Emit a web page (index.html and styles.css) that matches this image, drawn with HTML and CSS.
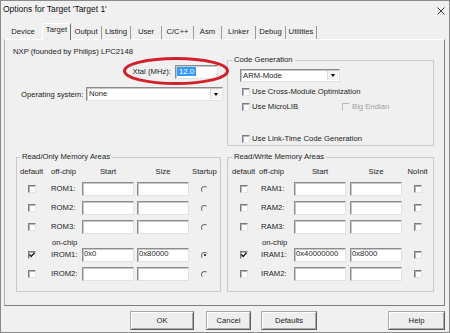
FILE: index.html
```html
<!DOCTYPE html>
<html>
<head>
<meta charset="utf-8">
<title>Options for Target 'Target 1'</title>
<link rel="stylesheet" href="styles.css">
</head>
<body>
<div class="window">
  <div class="titlebar">
    <span class="title">Options for Target 'Target 1'</span>
    <svg class="close" width="8" height="8" viewBox="0 0 8 8"><path d="M0.5 0.5 L7.5 7.5 M7.5 0.5 L0.5 7.5" stroke="#3a3a3a" stroke-width="1" fill="none"/></svg>
  </div>
  <div class="tabs">
    <div class="tab w-device no-sep">Device</div>
    <div class="tab w-target active">Target</div>
    <div class="tab w-output">Output</div>
    <div class="tab w-listing">Listing</div>
    <div class="tab w-user">User</div>
    <div class="tab w-cc">C/C++</div>
    <div class="tab w-asm">Asm</div>
    <div class="tab w-linker">Linker</div>
    <div class="tab w-debug">Debug</div>
    <div class="tab w-util">Utilities</div>
  </div>
  <div class="panel">
    <div class="top">
      <div class="left-col">
        <div class="device">NXP (founded by Philips) LPC2148</div>
        <div class="xtal-row">
          <span class="lbl-right">Xtal (MHz):</span>
          <div class="field field-xtal"><span class="sel">12.0</span></div>
        </div>
        <div class="os-row">
          <span>Operating system:</span>
          <div class="combo combo-os"><span class="combo-text">None</span><span class="combo-btn"><i class="arrow"></i></span></div>
        </div>
      </div>
      <fieldset class="group codegen">
        <legend>Code Generation</legend>
        <div class="codegen-body">
          <div class="combo combo-arm"><span class="combo-text">ARM-Mode</span><span class="combo-btn"><i class="arrow"></i></span></div>
          <div class="check-row row-cmo"><span class="cb"></span><span>Use Cross-Module Optimization</span></div>
          <div class="check-row row-micro">
            <span class="check-item micro"><span class="cb"></span><span>Use MicroLIB</span></span>
            <span class="check-item disabled"><span class="cb cb-disabled"></span><span>Big Endian</span></span>
          </div>
          <div class="check-row row-ltcg"><span class="cb"></span><span>Use Link-Time Code Generation</span></div>
        </div>
      </fieldset>
    </div>
    <div class="mem">
      <fieldset class="group mem-ro">
        <legend class="legend-ro">Read/Only Memory Areas</legend>
        <div class="memgrid ro">
          <span class="hd">default</span><span class="hd hd-off">off-chip</span><span class="hd hd-in">Start</span><span class="hd hd-in">Size</span><span class="hd">Startup</span>

          <span class="ck-cell"><span class="cb"></span></span><span class="lbl">ROM1:</span><span class="field"></span><span class="field"></span><span class="ck-cell"><span class="radio"></span></span>

          <span class="ck-cell"><span class="cb"></span></span><span class="lbl">ROM2:</span><span class="field"></span><span class="field"></span><span class="ck-cell"><span class="radio"></span></span>

          <span class="ck-cell"><span class="cb"></span></span><span class="lbl">ROM3:</span><span class="field"></span><span class="field"></span><span class="ck-cell"><span class="radio"></span></span>

          <span></span><span class="onchip">on-chip</span><span></span><span></span><span></span>

          <span class="ck-cell"><span class="cb checked"><svg width="6" height="6" viewBox="0 0 6 6"><path d="M0.5 2.5 L2.3 4.5 L5.5 0.8" stroke="#1a1a1a" stroke-width="1.4" fill="none"/></svg></span></span><span class="lbl">IROM1:</span><span class="field"><span class="val">0x0</span></span><span class="field"><span class="val">0x80000</span></span><span class="ck-cell"><span class="radio on"></span></span>

          <span class="ck-cell"><span class="cb"></span></span><span class="lbl">IROM2:</span><span class="field"></span><span class="field"></span><span class="ck-cell"><span class="radio"></span></span>
        </div>
      </fieldset>
      <fieldset class="group mem-rw">
        <legend>Read/Write Memory Areas</legend>
        <div class="memgrid rw">
          <span class="hd">default</span><span class="hd hd-off">off-chip</span><span class="hd hd-in">Start</span><span class="hd hd-in">Size</span><span class="hd">NoInit</span>

          <span class="ck-cell"><span class="cb"></span></span><span class="lbl">RAM1:</span><span class="field"></span><span class="field"></span><span class="ck-cell"><span class="cb"></span></span>

          <span class="ck-cell"><span class="cb"></span></span><span class="lbl">RAM2:</span><span class="field"></span><span class="field"></span><span class="ck-cell"><span class="cb"></span></span>

          <span class="ck-cell"><span class="cb"></span></span><span class="lbl">RAM3:</span><span class="field"></span><span class="field"></span><span class="ck-cell"><span class="cb"></span></span>

          <span></span><span class="onchip">on-chip</span><span></span><span></span><span></span>

          <span class="ck-cell"><span class="cb checked"><svg width="6" height="6" viewBox="0 0 6 6"><path d="M0.5 2.5 L2.3 4.5 L5.5 0.8" stroke="#1a1a1a" stroke-width="1.4" fill="none"/></svg></span></span><span class="lbl">IRAM1:</span><span class="field"><span class="val">0x40000000</span></span><span class="field"><span class="val">0x8000</span></span><span class="ck-cell"><span class="cb"></span></span>

          <span class="ck-cell"><span class="cb"></span></span><span class="lbl">IRAM2:</span><span class="field"></span><span class="field"></span><span class="ck-cell"><span class="cb"></span></span>
        </div>
      </fieldset>
    </div>
  </div>
  <div class="buttons">
    <div class="btn btn-ok">OK</div>
    <div class="btn btn-cancel">Cancel</div>
    <div class="btn btn-defaults">Defaults</div>
    <div class="btn btn-help">Help</div>
  </div>
  <svg class="annotation" width="112" height="32" viewBox="0 0 112 32"><ellipse cx="56" cy="16" rx="51.5" ry="12.5" fill="none" stroke="#d3212b" stroke-width="3"/></svg>
</div>
</body>
</html>
```

FILE: styles.css
```css
* { box-sizing: border-box; }
html, body { margin: 0; padding: 0; }
body {
  width: 450px;
  height: 333px;
  overflow: hidden;
  background: #f0f0f0;
  font-family: "Liberation Sans", Arial, sans-serif;
  font-size: 7.7px;
  color: #1c1c1c;
}
.window {
  position: relative;
  width: 450px;
  height: 333px;
  border: 1px solid #8a8a8a;
  background: #f0f0f0;
}
.titlebar {
  height: 22px;
  display: flex;
  align-items: flex-start;
  justify-content: space-between;
  padding: 2px 0 0 2px;
}
.title { font-size: 8.5px; line-height: 12px; color: #111; }
.close { margin: 4px 4px 0 0; }

.tabs {
  height: 16px;
  display: flex;
  align-items: flex-end;
  padding-left: 3px;
}
.tab {
  height: 13px;
  line-height: 10px;
  padding-top: 1px;
  text-align: center;
  border-right: 1px solid #9a9a9a;
  white-space: nowrap;
}
.tab.no-sep { border-right: none; }
.tab.active {
  height: 16px;
  padding-top: 1px;
  border-top: 1px solid #ffffff;
  border-left: 1px solid #ffffff;
  border-right: 1px solid #6f6f6f;
  margin-bottom: -1px;
  height: 17px;
  position: relative;
  background: #f0f0f0;
}
.w-device { width: 38px; }
.w-target { width: 29px; }
.w-output { width: 31px; }
.w-listing { width: 29px; }
.w-user { width: 31px; }
.w-cc { width: 32px; }
.w-asm { width: 28px; }
.w-linker { width: 34px; }
.w-debug { width: 30px; }
.w-util { width: 31px; }

.panel {
  margin: 0 4px 0 3px;
  height: 267px;
  border: 1px solid;
  border-color: #ffffff #7f7f7f #7f7f7f #b0b0b0;
}
.top {
  display: grid;
  grid-template-columns: 222px 207px;
  height: 106px;
}
.device { margin: 7px 0 0 8px; line-height: 10px; }
.xtal-row {
  display: grid;
  grid-template-columns: 166px 43px;
  column-gap: 4px;
  align-items: center;
  height: 14px;
  margin-top: 8px;
}
.lbl-right { text-align: right; line-height: 10px; }
.os-row {
  display: grid;
  grid-template-columns: 65px 137px;
  align-items: center;
  height: 14px;
  margin: 8px 0 0 16px;
}

.field {
  display: block;
  width: 52px;
  height: 14px;
  background: #ffffff;
  border: 1px solid;
  border-color: #8c8c8c #e2e2e2 #e2e2e2 #8c8c8c;
  box-shadow: inset 1px 1px 0 #c8c8c8;
  line-height: 10px;
  padding: 0 0 0 1px;
  white-space: nowrap;
  overflow: hidden;
}
.field-xtal { width: 43px; padding: 1px 0 0 1px; }
.sel {
  display: inline-block;
  background: #3399ff;
  color: #ffffff;
  padding: 0 2px;
  line-height: 9px;
}
.val { color: #1c1c1c; }

.combo {
  display: flex;
  height: 14px;
  background: #ffffff;
  border: 1px solid;
  border-color: #8c8c8c #e2e2e2 #e2e2e2 #8c8c8c;
  box-shadow: inset 1px 1px 0 #c8c8c8;
}
.combo-text { line-height: 12px; padding-left: 2px; flex: 1; }
.combo-btn {
  width: 11px;
  margin: 1px 1px 1px 0;
  display: flex;
  align-items: center;
  justify-content: center;
  background: #f4f4f4;
  border-left: 1px solid #dadada;
}
.arrow {
  width: 0;
  height: 0;
  border-left: 2.5px solid transparent;
  border-right: 2.5px solid transparent;
  border-top: 3px solid #000;
}
.combo-arm { width: 100px; height: 13px; }
.combo-arm .combo-text { line-height: 11px; }

.group {
  margin: 0;
  padding: 0;
  min-width: 0;
  border: 1px solid #cacaca;
}
.group legend {
  padding: 0 2px;
  margin-left: 4px;
  line-height: 10px;
}
.group .legend-ro { margin-left: 3px; }
.codegen { margin-top: 15px; }
.codegen-body { padding: 4px 0 0 12px; }
.check-row {
  display: flex;
  align-items: center;
  height: 12px;
  padding-left: 2px;
  line-height: 10px;
}
.row-cmo { margin-top: 4px; }
.row-micro { margin-top: 3px; }
.row-ltcg { margin-top: 20px; }
.check-item { display: flex; align-items: center; }
.micro { width: 100px; }
.disabled { color: #a0a0a0; }

.cb {
  display: inline-flex;
  align-items: center;
  justify-content: center;
  width: 8px;
  height: 8px;
  margin-right: 2px;
  background: #ffffff;
  border: 1px solid;
  border-color: #7c7c7c #e4e4e4 #e4e4e4 #7c7c7c;
  box-shadow: inset 1px 1px 0 #b4b4b4;
  flex: none;
}
.cb-disabled { border-color: #b8b8b8 #ededed #ededed #b8b8b8; box-shadow: none; background: #f0f0f0; }
.ck-cell .cb { margin-right: 0; }

.radio {
  display: block;
  width: 7px;
  height: 7px;
  border-radius: 50%;
  border: 1px solid;
  border-color: #6e6e6e #f0f0f0 #f0f0f0 #6e6e6e;
  position: relative;
}
.radio.on::after {
  content: "";
  position: absolute;
  left: 1.5px;
  top: 1.5px;
  width: 2px;
  height: 2px;
  border-radius: 50%;
  background: #111;
}

.mem {
  display: grid;
  grid-template-columns: 205px 207px;
  column-gap: 6px;
  padding-left: 11px;
  margin-top: 6px;
}
.memgrid {
  display: grid;
  grid-template-rows: 15px 19px 19px 14px 14px 19px 14px;
  align-items: start;
  padding: 5px 0 10px 0;
}
.ro { grid-template-columns: 29px 36px 55px 52px 31px; }
.rw { grid-template-columns: 31px 35px 56px 52px 31px; }
.hd { line-height: 10px; text-align: center; white-space: nowrap; }
.hd-in { width: 52px; }
.hd-off { text-align: left; padding-left: 5px; }
.rw .hd-off { padding-left: 0; }
.lbl { line-height: 14px; padding-left: 5px; white-space: nowrap; }
.rw .lbl { padding-left: 2px; }
.onchip { align-self: end; line-height: 10px; padding-left: 6px; white-space: nowrap; }
.rw .onchip { padding-left: 3px; }
.ck-cell {
  display: flex;
  align-items: center;
  justify-content: center;
  height: 14px;
}

.buttons {
  display: flex;
  height: 19px;
  margin-top: 5px;
  padding-left: 129px;
}
.btn {
  height: 19px;
  line-height: 17px;
  text-align: center;
  background: #eeeeee;
  border: 1px solid;
  border-color: #a9a9a9 #5e5e5e #5e5e5e #a9a9a9;
  box-shadow: inset 1px 1px 0 #ffffff, inset -1px -1px 0 #a8a8a8;
}
.btn-ok { width: 64px; }
.btn-cancel { width: 45px; margin-left: 12px; }
.btn-defaults { width: 56px; margin-left: 10px; }
.btn-help { width: 57px; margin-left: auto; margin-right: 4px; }

.annotation {
  position: absolute;
  left: 119px;
  top: 54px;
}
```
